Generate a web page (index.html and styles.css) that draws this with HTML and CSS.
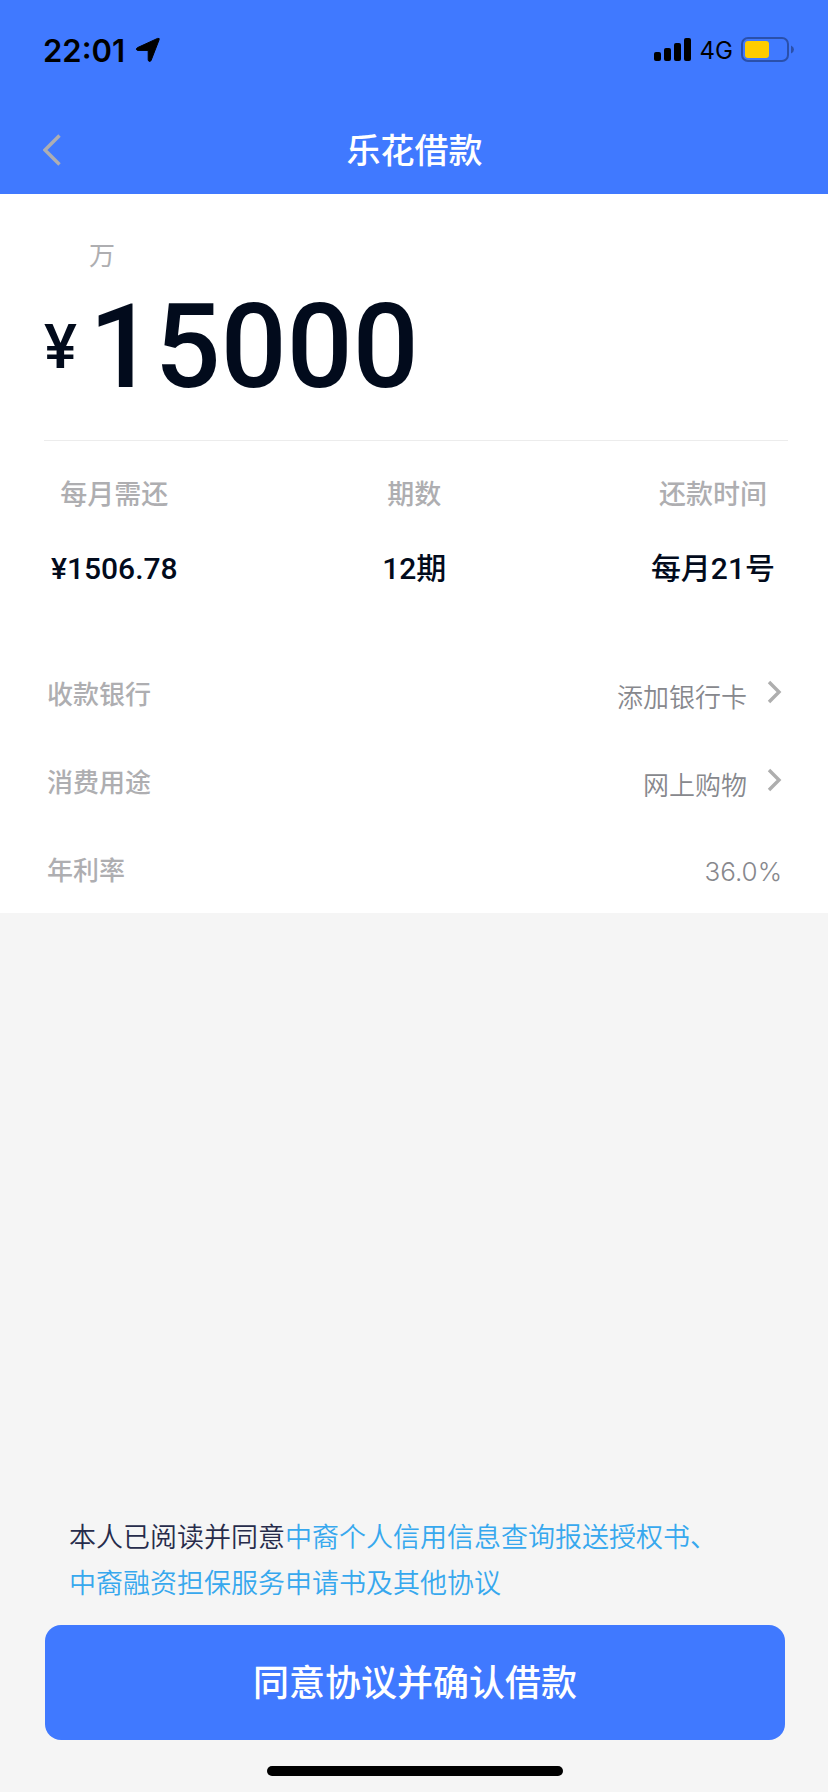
FILE: index.html
```html
<!DOCTYPE html>
<html lang="zh-CN">
<head>
  <meta charset="UTF-8" />
  <meta name="viewport" content="width=device-width, initial-scale=1" />
  <title>乐花借款</title>
  <link rel="stylesheet" href="styles.css">
</head>
<body>
  <header class="header">
    <div class="status-bar">
      <span class="time">22:01</span>
      <svg class="location" width="26" height="26" viewBox="0 0 26 26">
        <path d="M24 3 16.2 23.2Q15.6 24.6 14.4 24.4Q13.2 24.2 13.2 22.8V13.4H3Q1.4 13.2 1.4 12.2Q1.4 11.2 2.6 10.6L22.6 1.4Q25 .8 24 3Z" fill="#000" stroke="#000" stroke-linejoin="round" />
      </svg>
      <div class="status-right">
        <svg width="38" height="24" viewBox="0 0 38 24">
          <rect x="0" y="14" width="7" height="9" rx="2" />
          <rect x="10" y="10" width="7" height="13" rx="2" />
          <rect x="20" y="5" width="7" height="18" rx="2" />
          <rect x="30" y="0" width="7" height="23" rx="2" />
        </svg>
        <span class="network">4G</span>
        <svg width="54" height="26" viewBox="0 0 54 26">
          <rect x="1" y="1" width="46" height="23" rx="6" fill="none" stroke="#2a50ab" stroke-width="2" />
          <rect x="4" y="4" width="24" height="17" rx="3" fill="#ffcc00" />
          <path d="M50 8.5Q53 9.8 53 12.5T50 16.5Z" fill="#2a50ab" />
        </svg>
      </div>
    </div>
    <nav class="nav-bar">
      <a class="back" href="#" aria-label="返回">
        <svg width="18" height="32" viewBox="0 0 18 32">
          <path d="M16.5 1.5 2 16 16.5 30.5" fill="none" stroke="#aeaeb2" stroke-width="3.4" />
        </svg>
      </a>
      <h1>乐花借款</h1>
    </nav>
  </header>

  <main class="loan">
    <section class="amount">
      <div class="unit">万</div>
      <div class="sum"><span class="currency">¥</span><span class="number">15000</span></div>
    </section>

    <dl class="summary">
      <div>
        <dt>每月需还</dt>
        <dd>¥1506.78</dd>
      </div>
      <div>
        <dt>期数</dt>
        <dd>12期</dd>
      </div>
      <div>
        <dt>还款时间</dt>
        <dd>每月21号</dd>
      </div>
    </dl>

    <div class="rows">
      <a class="row" href="#">
        <span class="row-label">收款银行</span>
        <span class="row-value">添加银行卡</span>
        <svg class="chevron" width="15" height="24" viewBox="0 0 15 24">
          <path d="M2 2 12 12 2 22" fill="none" stroke="#aeaeae" stroke-width="3.4" />
        </svg>
      </a>
      <a class="row" href="#">
        <span class="row-label">消费用途</span>
        <span class="row-value">网上购物</span>
        <svg class="chevron" width="15" height="24" viewBox="0 0 15 24">
          <path d="M2 2 12 12 2 22" fill="none" stroke="#aeaeae" stroke-width="3.4" />
        </svg>
      </a>
      <div class="row">
        <span class="row-label">年利率</span>
        <span class="row-value">36.0%</span>
      </div>
    </div>
  </main>

  <footer class="footer">
    <p class="terms">本人已阅读并同意<a href="#">中裔个人信用信息查询报送授权书、</a><br><a href="#">中裔融资担保服务申请书及其他协议</a></p>
    <button class="confirm" type="button">同意协议并确认借款</button>
    <div class="home-bar"></div>
  </footer>
</body>
</html>
```
FILE: styles.css
```css
:root {
  --blue: #4079ff;
  --dark: #020b1c;
  --gray: #aeaeb1;
  --link: #37a8ee;
}

* {
  box-sizing: border-box;
}

body {
  margin: 0;
  min-height: 100vh;
  display: flex;
  flex-direction: column;
  background: #f5f5f5;
  color: var(--dark);
  font-family: Inter, "Noto Sans CJK SC", sans-serif;
}

a {
  color: inherit;
  text-decoration: none;
}

svg {
  display: block;
}

/* Header */
.header {
  background: var(--blue);
}

.status-bar {
  display: flex;
  align-items: center;
  height: 106px;
  padding: 0 33px 6px 43px;
  color: #000;
}

.time {
  font-size: 31px;
  font-weight: 600;
}

.location {
  margin-left: 10px;
}

.status-right {
  display: flex;
  align-items: center;
  gap: 8px;
  margin-left: auto;
}

.network {
  font-size: 24px;
}

.nav-bar {
  display: grid;
  grid-template-columns: 1fr auto 1fr;
  align-items: center;
  height: 88px;
  padding: 0 42px 0 43px;
}

.back {
  justify-self: start;
}

h1 {
  margin: 0;
  padding-bottom: 4px;
  color: #fff;
  font-size: 34px;
  font-weight: 500;
}

/* Amount */
.loan {
  background: #fff;
}

.amount {
  margin: 0 40px 0 44px;
  padding-top: 42px;
  border-bottom: 1px solid #ececec;
}

.unit {
  padding-left: 45px;
  color: var(--gray);
  font-size: 26px;
  line-height: 40px;
}

.sum {
  display: flex;
  align-items: center;
  height: 164px;
  padding-bottom: 22px;
  font-family: Roboto, sans-serif;
  font-weight: 500;
  line-height: 1;
}

.currency {
  font-size: 62px;
}

.number {
  margin-left: 12px;
  font-size: 116px;
}

.summary {
  display: flex;
  justify-content: space-between;
  margin: 0;
  padding: 34px 53px 57px 51px;
  text-align: center;
  font-weight: 500;
}

dt {
  color: var(--gray);
  font-size: 27px;
  line-height: 40px;
}

dd {
  margin: 32px 0 0;
  font-family: Roboto, "Noto Sans CJK SC", sans-serif;
  font-size: 30px;
  line-height: 44px;
}

/* Detail rows */
.rows {
  padding: 0 46px 1px 47px;
}

.row {
  display: flex;
  align-items: center;
  height: 88px;
}

.row-label {
  color: var(--gray);
  font-size: 26px;
  font-weight: 500;
}

.row-value {
  margin-left: auto;
  padding-top: 6px;
  color: #87888d;
  font-size: 26px;
  font-weight: 350;
}

.chevron {
  margin-left: 20px;
}

/* Agreement and button */
.footer {
  margin-top: auto;
  padding: 0 43px 16px 45px;
}

.terms {
  margin: 0 0 18px;
  padding: 0 24px;
  color: #272c4b;
  font-size: 27px;
  font-weight: 350;
  line-height: 46px;
}

.terms a {
  color: var(--link);
}

.confirm {
  display: block;
  width: 100%;
  height: 115px;
  padding: 0 0 6px;
  border: none;
  border-radius: 16px;
  background: var(--blue);
  color: #fff;
  font-family: inherit;
  font-size: 36px;
  font-weight: 500;
  cursor: pointer;
}

.home-bar {
  width: 40%;
  height: 10px;
  margin: 26px auto 0;
  border-radius: 5px;
  background: #000;
}
```
